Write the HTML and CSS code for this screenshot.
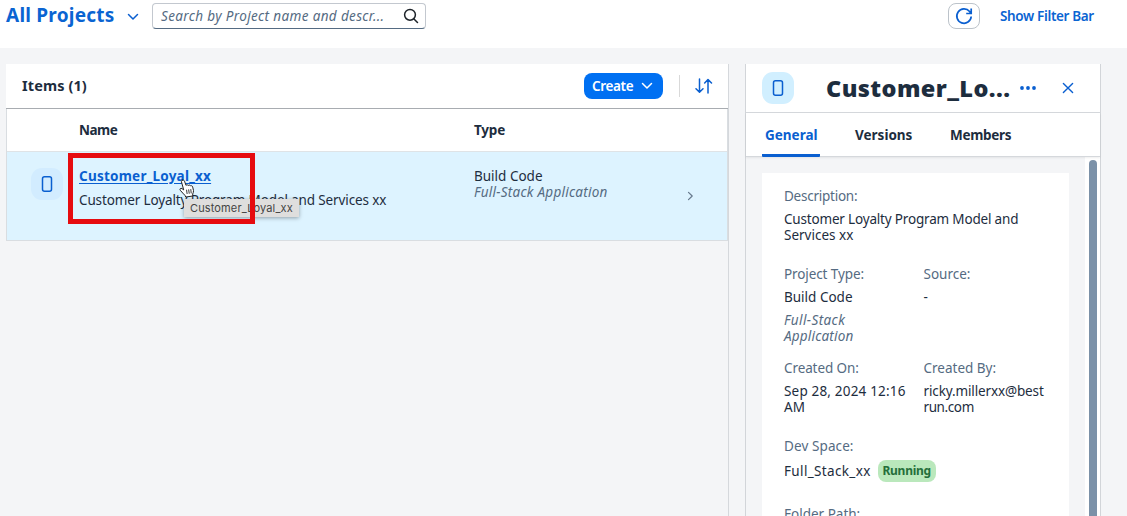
FILE: index.html
```html
<!DOCTYPE html>
<html lang="en">
<head>
<meta charset="utf-8">
<title>All Projects</title>
<link rel="stylesheet" href="styles.css">
</head>
<body>
<div class="page">
  <header class="topbar">
    <h1 class="title"><span class="t-title">All Projects</span></h1>
    <svg class="title-arrow" width="12" height="8" viewBox="0 0 12 8"><path d="M1.5 1.5 6 6l4.500-4.500"/></svg>
    <div class="search">
      <span class="t-search">Search by Project name and descr...</span>
      <svg width="16" height="16" viewBox="0 0 16 16"><circle cx="7" cy="6.800" r="5.400"/><path d="m11 11 3.500 3.500"/></svg>
    </div>
    <button class="refresh"><svg width="18" height="18" viewBox="0 0 18 18"><path d="M16.200 9.500A7.200 7.200 0 1 1 14.600 4.500L16 6.200M16.200 1.500v5h-5"/></svg></button>
    <a class="filter-link"><span class="t-filter">Show Filter Bar</span></a>
  </header>

  <main class="content">
    <section class="list">
      <div class="toolbar">
        <h2 class="items"><span class="t-items">Items (1)</span></h2>
        <button class="create"><span class="t-create">Create</span><svg width="12" height="8" viewBox="0 0 12 8"><path d="M1.500 1.500 6 6l4.500-4.500"/></svg></button>
        <span class="divider"></span>
        <svg class="sort" width="18" height="16" viewBox="0 0 18 16"><path d="M4.500 1v13M1 10.800l3.500 3.400L8 10.800M13 15V1.800M9.700 5 13 1.600 16.500 5"/></svg>
      </div>
      <div class="table">
        <div class="head">
          <span class="c-name"><span class="t-name">Name</span></span>
          <span><span class="t-type">Type</span></span>
        </div>
        <div class="row">
          <div class="tile tile-row"><svg width="12" height="18" viewBox="0 0 12 18"><rect x="1.500" y="1.800" width="9" height="14.400" rx="2"/></svg></div>
          <div class="cell-name">
            <a class="link"><span class="t-link">Customer_Loyal_xx</span></a>
            <span class="desc"><span class="t-desc">Customer Loyalty Program Model and Services xx</span></span>
          </div>
          <div class="cell-type">
            <span class="t-build">Build Code</span>
            <em class="t-full">Full-Stack Application</em>
          </div>
          <svg class="nav" width="7" height="10" viewBox="0 0 7 10"><path d="m1.500 1.300 3.700 3.700-3.700 3.700"/></svg>
          <div class="tooltip"><span class="t-tip">Customer_Loyal_xx</span></div>
          <div class="highlight"></div>
          <svg class="pointer" width="17" height="19" viewBox="0 0 17 19"><path class="hand" d="M3.200 1.200c1-.6 2 0 2.300 1l1.500 4.200c.5-.8 1.800-.8 2.300.1.700-.7 1.900-.5 2.300.4.900-.5 2 .1 2.100 1.200l.8 3.400c.2 1.300-.4 2.300-.8 3.500l.1 2-7 1-.9-1.700C4.700 15 3 13.400 1.300 11.300c-1-1.300.4-2.600 1.700-1.700l1.700 1.300L2.500 3c-.2-.7 0-1.400.7-1.800z"/><path class="fingers" d="m7.600 11.100.5 3.500M9.700 10.800l.5 3.500M11.800 10.500l.4 3.500"/></svg>
        </div>
      </div>
    </section>

    <aside class="panel">
      <div class="panel-head">
        <div class="tile"><svg width="12" height="18" viewBox="0 0 12 18"><rect x="1.500" y="1.800" width="9" height="14.400" rx="2"/></svg></div>
        <h2 class="panel-title"><span class="t-panel">Customer_Lo...</span></h2>
        <svg class="more" width="18" height="6" viewBox="0 0 18 6"><circle cx="3" cy="3" r="1.900"/><circle cx="9" cy="3" r="1.900"/><circle cx="15" cy="3" r="1.900"/></svg>
        <svg class="close" width="12" height="12" viewBox="0 0 12 12"><path d="m1.400 1.400 9.200 9.200M10.600 1.400l-9.200 9.200"/></svg>
      </div>
      <nav class="tabs">
        <a class="tab active"><span class="t-general">General</span></a>
        <a class="tab"><span class="t-versions">Versions</span></a>
        <a class="tab"><span class="t-members">Members</span></a>
      </nav>
      <div class="panel-body">
        <div class="details">
          <dl class="field wide">
            <dt><span class="t-l1">Description:</span></dt>
            <dd><span class="t-v1">Customer Loyalty Program Model and</span><br><span class="t-v2">Services xx</span></dd>
          </dl>
          <dl class="field f-type">
            <dt><span class="t-l2">Project Type:</span></dt>
            <dd><span class="t-build">Build Code</span></dd>
            <dd class="muted"><span class="t-v3">Full-Stack</span><br><span class="t-v4">Application</span></dd>
          </dl>
          <dl class="field">
            <dt><span class="t-l3">Source:</span></dt>
            <dd>-</dd>
          </dl>
          <dl class="field">
            <dt><span class="t-l4">Created On:</span></dt>
            <dd><span class="t-v5">Sep 28, 2024 12:16</span><br><span class="t-v6">AM</span></dd>
          </dl>
          <dl class="field">
            <dt><span class="t-l5">Created By:</span></dt>
            <dd><span class="t-v7">ricky.millerxx@best</span><br><span class="t-v8">run.com</span></dd>
          </dl>
          <dl class="field wide space">
            <dt><span class="t-l6">Dev Space:</span></dt>
            <dd class="dev"><span class="t-v9">Full_Stack_xx</span><span class="badge"><span class="t-run">Running</span></span></dd>
          </dl>
          <dl class="field wide">
            <dt><span class="t-l7">Folder Path:</span></dt>
          </dl>
        </div>
        <div class="track"><div class="thumb"></div></div>
      </div>
    </aside>
  </main>
</div>
</body>
</html>
```
FILE: styles.css
```css
* { box-sizing: border-box; }
body { margin: 0; font-family: "Noto Sans", sans-serif; font-size: 13.500px; line-height: 16px; color: #1d2d3e; }
h1, h2, dl, dd { margin: 0; }
svg { display: block; fill: none; stroke: #0a5fd0; stroke-width: 1.500; stroke-linecap: round; stroke-linejoin: round; flex: none; }
button { font: inherit; padding: 0; }
span { white-space: nowrap; }

.page { width: 1127px; height: 516px; overflow: hidden; background: #f4f5f7; display: flex; flex-direction: column; }
.topbar { height: 48px; flex: none; background: #fff; display: flex; align-items: flex-start; padding-left: 6px; }
.title { font-size: 19px; line-height: 24px; font-weight: 700; color: #0a64d2; width: 121px; padding-top: 3px; }
.title-arrow { margin-top: 13px; }
.search { width: 274px; height: 26px; margin: 3px 0 0 13px; padding: 0 6px 0 8px; border: 1px solid #c3c8cf; border-bottom-color: #556b82; border-radius: 4px; display: flex; align-items: center; justify-content: space-between; font-style: italic; color: #556b82; }
.search svg { stroke: #1d2329; }
.refresh { width: 32px; height: 26px; margin: 3px 0 0 522px; background: #fff; border: 1px solid #bcc3ca; border-radius: 8px; display: flex; align-items: center; justify-content: center; }
.refresh svg { stroke-width: 1.700; stroke-linecap: butt; stroke-linejoin: miter; }
.filter-link { margin: 8px 0 0 20px; color: #0a64d2; font-weight: 600; }

.content { flex: 1; min-height: 0; display: flex; padding: 16px 26px 0 6px; }
.list { width: 723px; flex: none; border-right: 1px solid #d5d8dc; }
.toolbar { height: 45px; background: #fff; border-bottom: 1px solid #a8acb1; display: flex; align-items: center; padding-left: 16px; }
.items { font-size: 14.500px; width: 562px; padding-bottom: 2px; }
.create { width: 79px; height: 26px; background: #0070f2; color: #fff; border: 0; border-radius: 8px; font-weight: 600; display: flex; align-items: center; padding-left: 8px; gap: 8px; }
.create .t-create { width: 41px; text-align: left; }
.create svg { stroke: #fff; }
.divider { width: 1px; height: 22px; background: #d9d9d9; margin: 0 15px 0 16px; }
.table { border: 1px solid #d9dde1; border-top: 0; background: #fff; }
.head { height: 43px; border-bottom: 1px solid #dfe3e6; display: flex; align-items: center; font-weight: 700; padding-left: 72px; }
.c-name { width: 395px; }
.row { height: 88px; background: #ddf3ff; display: flex; align-items: flex-start; position: relative; padding-left: 24px; }
.tile { width: 32px; height: 32px; border-radius: 11px; background: #d1efff; display: flex; align-items: center; justify-content: center; flex: none; }
.tile-row { margin-top: 16px; background: #d2ecff; }
.cell-name { width: 395px; padding-top: 16px; margin-left: 16px; display: flex; flex-direction: column; gap: 8px; }
.link { color: #0a5fd0; font-weight: 700; text-decoration: underline; text-underline-offset: 2px; }
.cell-type { width: 213px; padding-top: 16px; display: flex; flex-direction: column; align-items: flex-start; }
.cell-type em { color: #556b82; white-space: nowrap; }
.nav { margin-top: 39px; stroke: #66788c; stroke-width: 1.200; }
.tooltip { position: absolute; left: 177px; top: 47px; width: 115px; height: 18px; background: #dfdedd; box-shadow: 0 1px 4px rgba(0,0,0,.35); color: #444; font: 11px/18px Inter, sans-serif; padding-left: 6px; }
.highlight { position: absolute; left: 61px; top: 1px; width: 187px; height: 71px; border: 5px solid #e60b0f; }
.pointer { position: absolute; left: 172px; top: 27px; }
.hand { fill: #fff; stroke: #222; stroke-width: 1; }
.fingers { stroke: #222; stroke-width: .9; }

.panel { width: 356px; margin-left: 16px; border: 1px solid #d2d5d9; border-width: 0 1px; display: flex; flex-direction: column; }
.panel-head { height: 49px; flex: none; background: #fff; border-bottom: 1px solid #d5d8dc; display: flex; align-items: center; padding-left: 16px; }
.panel-title { font-size: 23.500px; line-height: 28px; font-weight: 900; width: 194px; margin-left: 32px; padding-bottom: 1px; }
.more { fill: #0a5fd0; stroke: none; margin-left: -1px; }
.close { margin-left: 25px; stroke-width: 1.400; }
.tabs { height: 44px; flex: none; background: #fff; border-bottom: 1px solid #d5d8dc; box-shadow: 0 1px 2px rgba(0,0,0,.07); display: flex; padding-left: 16px; font-weight: 700; gap: 32px; position: relative; }
.tab { height: 44px; padding: 14px 3px 0; }
.active { color: #0a5fd0; border-bottom: 3px solid #0a5fd0; border-radius: 0 0 1px 1px; width: 58px; }
.tab:nth-child(2) { width: 63px; }
.panel-body { flex: 1; min-height: 0; display: flex; justify-content: space-between; padding-left: 16px; }
.details { width: 307px; margin-top: 16px; padding: 15px 22px 0; background: #fff; display: grid; grid-template-columns: 139.500px 123px; align-content: start; }
.field { padding-bottom: 23px; }
.field dt { color: #556b82; margin-bottom: 7px; }
.wide { grid-column: 1 / -1; }
.f-type { padding-bottom: 16px; }
.muted { color: #556b82; font-style: italic; margin-top: 7px; }
.space { padding-bottom: 24px; }
.dev { display: flex; align-items: center; gap: 7px; height: 22px; }
.space dt { margin-bottom: 6px; }
.badge { width: 58px; height: 22px; border-radius: 8px; background: #bae8bc; color: #256f3a; font-size: 12px; font-weight: 700; line-height: 22px; text-align: center; }
.track { width: 15px; background: #fff; padding: 3px 3px 0 4px; }
.thumb { height: 400px; border-radius: 4px; background: #7b91a8; }

/* Tracking */
.t-title { letter-spacing: .23px; }
.t-search { letter-spacing: .36px; }
.t-filter { letter-spacing: -.35px; }
.t-items { letter-spacing: .1px; }
.t-create { letter-spacing: -.35px; }
.t-name { letter-spacing: -.5px; }
.t-type { letter-spacing: -.2px; }
.t-link { letter-spacing: .24px; }
.t-desc { letter-spacing: -.13px; }
.t-full { letter-spacing: .25px; }
.t-panel { letter-spacing: .4px; }
.t-members { letter-spacing: -.3px; }
.t-tip { letter-spacing: .13px; }
.t-l1 { letter-spacing: -.25px; }
.t-v1 { letter-spacing: -.18px; }
.t-l2, .t-l4 { letter-spacing: -.1px; }
.t-v3 { letter-spacing: .4px; }
.t-v4 { letter-spacing: .2px; }
.t-v5 { letter-spacing: .18px; }
.t-v7 { letter-spacing: -.13px; }
.t-v8 { letter-spacing: -.4px; }
.t-l6 { letter-spacing: .1px; }
.t-v9 { letter-spacing: .35px; }
.t-run { letter-spacing: -.25px; }
```
